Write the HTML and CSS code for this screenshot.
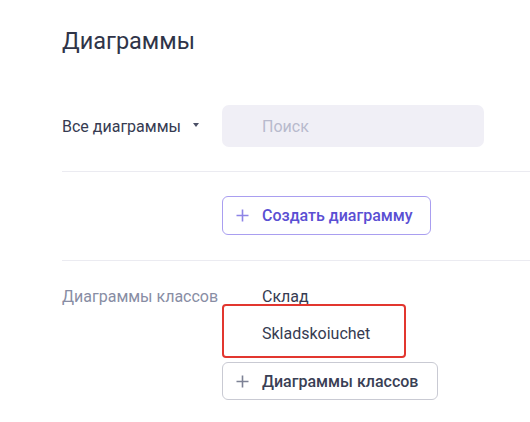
FILE: index.html
```html
<!DOCTYPE html>
<html lang="ru">
<head>
<meta charset="utf-8">
<link rel="stylesheet" href="styles.css">
</head>
<body>
<main class="page">
  <h1 class="title">Диаграммы</h1>

  <div class="filter-row">
    <div class="dropdown">
      <span>Все диаграммы</span>
      <span class="caret"></span>
    </div>
    <div class="search"><span class="placeholder">Поиск</span></div>
  </div>

  <div class="create-row">
    <button class="btn btn-primary">
      <svg class="plus" width="13" height="13" viewBox="0 0 13 13"><path d="M6.5 0.5v12M0.5 6.5h12" stroke="currentColor" stroke-width="1.6" fill="none"/></svg>
      <span>Создать диаграмму</span>
    </button>
  </div>

  <section class="group">
    <div class="group-label">Диаграммы классов</div>
    <div class="group-content">
      <ul class="items">
        <li class="item">Склад</li>
        <li class="item highlighted">Skladskoiuchet</li>
      </ul>
      <button class="btn btn-secondary">
        <svg class="plus" width="13" height="13" viewBox="0 0 13 13"><path d="M6.5 0.5v12M0.5 6.5h12" stroke="currentColor" stroke-width="1.6" fill="none"/></svg>
        <span>Диаграммы классов</span>
      </button>
    </div>
  </section>
</main>
</body>
</html>
```
FILE: styles.css
```css
* { box-sizing: border-box; }
html, body { margin: 0; padding: 0; background: #ffffff; }
body {
  font-family: Roboto, "Noto Sans", sans-serif;
  color: #373c52;
  overflow: hidden;
}
.page {
  padding-left: 62px;
}
.title {
  margin: 0;
  padding-top: 26px;
  font-size: 23.5px;
  line-height: 30px;
  font-weight: 400;
  color: #2f3448;
  height: 105px;
}
.filter-row {
  display: grid;
  grid-template-columns: 160px 262px;
  align-items: center;
  height: 67px;
  align-content: start;
  border-bottom: 1px solid #ebebf1;
}
.dropdown {
  display: flex;
  align-items: center;
  font-size: 16px;
  color: #363b51;
  height: 42px;
}
.caret {
  margin-left: 12px;
  width: 0; height: 0;
  border-left: 3.5px solid transparent;
  border-right: 3.5px solid transparent;
  border-top: 4px solid #4b5066;
  margin-top: -2px;
}
.search {
  height: 42px;
  background: #f0eff6;
  border-radius: 7px;
  display: flex;
  align-items: center;
  padding-left: 40px;
}
.placeholder {
  font-size: 16px;
  color: #b8bacd;
}
.create-row {
  padding: 24px 0 25px 160px;
  border-bottom: 1px solid #ebebf1;
}
.btn {
  display: inline-flex;
  align-items: center;
  gap: 13px;
  font-family: Roboto, "Noto Sans", sans-serif;
  font-size: 16px;
  font-weight: 500;
  background: #fff;
  border-radius: 6px;
  padding: 0 0 0 13px;
  cursor: pointer;
}
.btn-primary {
  height: 39px;
  width: 209px;
  border: 1px solid #a99ef0;
  color: #5a4fd3;
}
.btn-primary .plus { color: #8d84e6; }
.btn-secondary {
  height: 38px;
  width: 216px;
  border: 1px solid #c9cad3;
  color: #3a3f55;
}
.btn-secondary .plus { color: #7d8295; }
.group {
  display: grid;
  grid-template-columns: 160px 1fr;
  padding-top: 17px;
}
.group-label {
  font-size: 16px;
  color: #888da4;
  line-height: 37px;
}
.items {
  list-style: none;
  margin: 0;
  padding: 0;
}
.item {
  position: relative;
  height: 37px;
  line-height: 37px;
  padding-left: 40px;
  font-size: 16px;
  color: #363b51;
}
.highlighted::after {
  content: "";
  position: absolute;
  left: 0;
  top: -11px;
  width: 180px;
  height: 50px;
  border: 2.5px solid #e2362f;
  border-radius: 4px;
}
.group-content .btn-secondary { margin-top: 10px; }
```
